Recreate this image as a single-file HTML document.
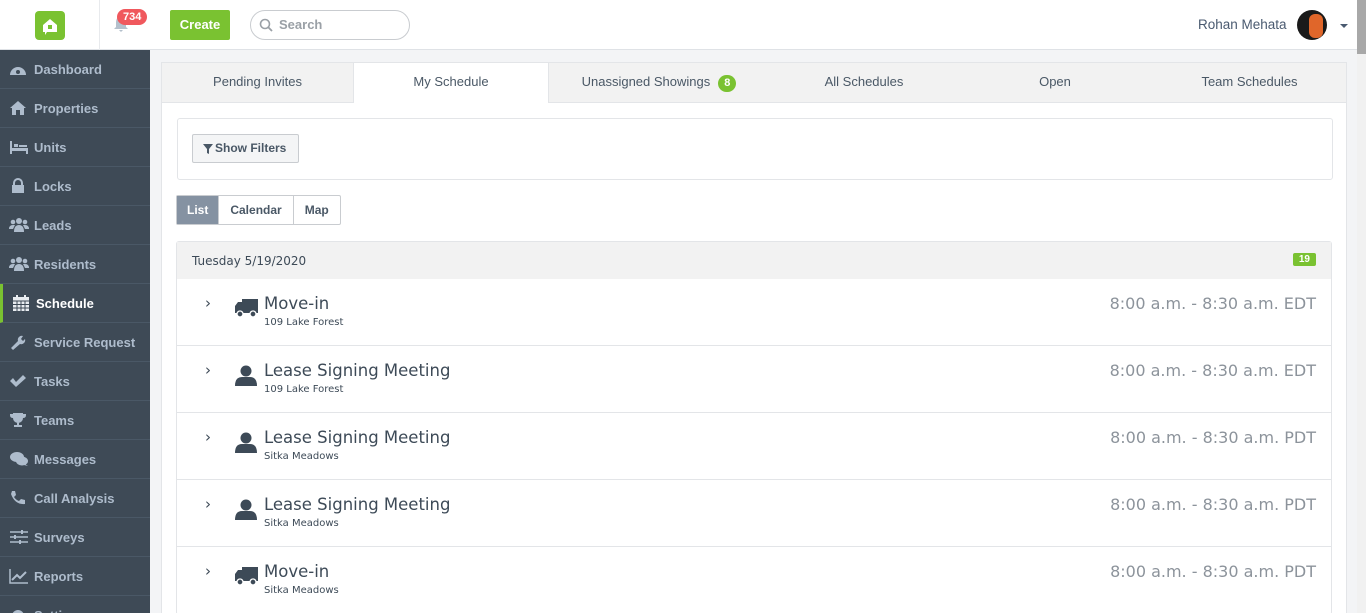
<!DOCTYPE html>
<html style="overflow:hidden;height:613px"><head><meta charset="utf-8"><style>
*{box-sizing:border-box;margin:0;padding:0}
body{width:1366px;height:613px;overflow:hidden;font-family:"Liberation Sans",sans-serif;background:#f3f4f6;position:relative}
.hdr{position:absolute;left:0;top:0;width:1357px;height:50px;background:#fff;border-bottom:1px solid #dfe2e6}
.sb{position:absolute;left:0;top:50px;width:150px;height:563px;background:#3e4a56;overflow:hidden}
.sb div{height:39px;border-bottom:1px solid #4a5866;color:#aebccc;font-weight:bold;font-size:13px;line-height:39px;padding-left:34px;position:relative}
.sb div svg{position:absolute;left:9px;top:11px}
.sb div.act{color:#fff;border-left:3px solid #7ac231;padding-left:33px}
.sb div.act svg{left:9px}
.scroll{position:absolute;left:1357px;top:0;width:9px;height:613px;background:#f1f1f1}
.scroll i{display:block;width:9px;height:54px;background:#a8a8a8}
.panel{position:absolute;left:161px;top:62px;width:1186px;height:551px;background:#fff;border:1px solid #e3e5e8;border-bottom:none;overflow:hidden}
.tabs{height:40px;background:#f2f2f2;border-bottom:1px solid #e3e5e8;display:flex}
.tabs div{flex:none;text-align:center;color:#4a5866;line-height:38px;font-size:13px}
.tabs div.on{background:#fff;border-left:1px solid #e3e5e8;border-right:1px solid #e3e5e8;height:40px}
.badge{display:inline-block;background:#7ac231;color:#fff;border-radius:10px;font-size:11px;font-weight:bold;padding:0 6px;line-height:17px;margin-left:8px}
.fbox{position:absolute;left:15px;top:55px;width:1156px;height:62px;border:1px solid #e3e5e8;border-radius:3px}
.fbtn{position:absolute;left:14px;top:15px;width:107px;height:29px;border:1px solid #c9ccd0;border-radius:2px;background:#f4f5f6;font-size:12px;font-weight:bold;color:#4a5866;line-height:27px;padding-left:22px}
.seg{position:absolute;left:14px;top:132px;height:30px;display:flex;border:1px solid #c9ccd0;border-radius:2px}
.seg div{font-size:12px;font-weight:bold;color:#4a5866;line-height:28px;padding:0 11px;border-right:1px solid #c9ccd0}
.seg div:last-child{border:none}
.seg .on{background:#8592a2;color:#fff;padding:0 10px}
.list{position:absolute;left:14px;top:178px;width:1156px;border:1px solid #e3e5e8;border-radius:3px}
.dh{height:37px;background:#f2f2f2;font-family:"DejaVu Sans",sans-serif;font-size:12px;color:#3d4a57;line-height:38px;padding-left:15px;position:relative}
.dh span{position:absolute;right:15px;top:11px;background:#7ac231;color:#fff;font-size:10px;font-weight:bold;line-height:13px;padding:0 6px;border-radius:2px;font-family:"Liberation Sans",sans-serif}
.row{height:67px;border-bottom:1px solid #e3e5e8;position:relative;font-family:"DejaVu Sans",sans-serif}
.row .ch{position:absolute;left:28px;top:15px;color:#3d4a57;font-size:15px}
.row svg{position:absolute;left:57px;top:18px}
.row .t{position:absolute;left:87px;top:15px;font-size:16.5px;color:#3d4a57}
.row .s{position:absolute;left:87px;top:38px;font-size:10px;color:#3d4a57}
.row .tm{position:absolute;right:15px;top:15px;font-size:16px;color:#8c939b}
</style></head><body>
<div class="hdr">
 <div style="position:absolute;left:99px;top:0;width:1px;height:50px;background:#e8eaed"></div>
 <div style="position:absolute;left:35px;top:11px;width:30px;height:29px;background:#7ac231;border-radius:4px"><svg width="30" height="29"><path d="M8 14 L15 8 L22 14 L22 21 L12 21 L10 24 L10 21 L8 21Z" fill="#fff"/><rect x="13" y="14" width="4" height="4" fill="#7ac231"/></svg></div>
 <svg style="position:absolute;left:112px;top:15px" width="18" height="18"><path d="M9 1 C5 1 4 5 4 8 L4 12 L2 14 L16 14 L14 12 L14 8 C14 5 13 1 9 1Z M7 15 L11 15 L9 17Z" fill="#b4c0cc"/></svg>
 <div style="position:absolute;left:117px;top:9px;background:#f0585d;color:#fff;font-size:11px;font-weight:bold;border-radius:9px;padding:0 6px;line-height:16px">734</div>
 <div style="position:absolute;left:170px;top:10px;width:60px;height:30px;background:#7ac231;border-radius:2px;color:#fff;font-weight:bold;font-size:13px;line-height:30px;text-align:center">Create</div>
 <div style="position:absolute;left:250px;top:10px;width:160px;height:30px;border:1px solid #c9ccd0;border-radius:15px;font-size:13px;font-weight:bold;color:#9aa0a6;line-height:28px;padding-left:28px">Search<svg style="position:absolute;left:8px;top:7px" width="14" height="14"><circle cx="6" cy="6" r="4.5" stroke="#9aa0a6" stroke-width="1.6" fill="none"/><path d="M9.5 9.5 L13 13" stroke="#9aa0a6" stroke-width="1.8"/></svg></div>
 <div style="position:absolute;left:1198px;top:17px;font-size:13.5px;color:#4a5a70">Rohan Mehata</div>
 <div style="position:absolute;left:1297px;top:10px;width:30px;height:30px;border-radius:50%;background:#1a1a1a;overflow:hidden"><div style="position:absolute;left:12px;top:4px;width:14px;height:24px;background:#e0662a;border-radius:6px"></div></div>
 <div style="position:absolute;left:1340px;top:24px;border:4px solid transparent;border-top:4px solid #4a5a70"></div>
</div>
<div class="sb">
 <div><svg width="18" height="16"><path d="M1 14 A8 8 0 1 1 17 14Z" fill="#aebccc"/><circle cx="9" cy="11" r="2" fill="#3e4a56"/></svg>Dashboard</div>
 <div><svg width="18" height="16"><path d="M9 1 L1 8 L3 8 L3 15 L7 15 L7 10 L11 10 L11 15 L15 15 L15 8 L17 8Z" fill="#aebccc"/></svg>Properties</div>
 <div><svg width="20" height="16"><path d="M1 2 L3 2 L3 9 L19 9 L19 15 L17 15 L17 12 L3 12 L3 15 L1 15Z M5 5 h4 v3 h-4Z M10 6 h8 v2 h-8Z" fill="#aebccc"/></svg>Units</div>
 <div><svg width="18" height="16"><path d="M5 7 V5 A4 4 0 0 1 13 5 V7" stroke="#aebccc" stroke-width="2" fill="none"/><rect x="3" y="7" width="12" height="8" fill="#aebccc"/></svg>Locks</div>
 <div><svg width="20" height="16"><circle cx="10" cy="4" r="3" fill="#aebccc"/><circle cx="4" cy="5" r="2.3" fill="#aebccc"/><circle cx="16" cy="5" r="2.3" fill="#aebccc"/><path d="M5 15 Q5 8 10 8 Q15 8 15 15Z M0 12 Q0 8 4 8 L6 8 L4 12Z M20 12 Q20 8 16 8 L14 8 L16 12Z" fill="#aebccc"/></svg>Leads</div>
 <div><svg width="20" height="16"><circle cx="10" cy="4" r="3" fill="#aebccc"/><circle cx="4" cy="5" r="2.3" fill="#aebccc"/><circle cx="16" cy="5" r="2.3" fill="#aebccc"/><path d="M5 15 Q5 8 10 8 Q15 8 15 15Z M0 12 Q0 8 4 8 L6 8 L4 12Z M20 12 Q20 8 16 8 L14 8 L16 12Z" fill="#aebccc"/></svg>Residents</div>
 <div class="act"><svg width="18" height="16"><rect x="1" y="2" width="16" height="14" fill="#e8ecf0"/><path d="M1 6 H17 M1 9.5 H17 M1 13 H17 M5 6 V16 M9 6 V16 M13 6 V16" stroke="#3e4a56" stroke-width="1"/><rect x="4" y="0" width="2" height="4" fill="#e8ecf0"/><rect x="12" y="0" width="2" height="4" fill="#e8ecf0"/></svg>Schedule</div>
 <div><svg width="18" height="16"><path d="M2 14 L9 7 A4 4 0 0 1 14 2 L12 5 L14 7 L16 5 A4 4 0 0 1 11 10 L4 16Z" fill="#aebccc"/></svg>Service Request</div>
 <div><svg width="18" height="16"><path d="M1 8 L4 5 L7 9 L14 2 L17 5 L7 14Z" fill="#aebccc"/></svg>Tasks</div>
 <div><svg width="18" height="16"><path d="M4 1 H14 V6 A5 5 0 0 1 4 6Z M1 2 H4 V6 Q1 6 1 3Z M17 2 H14 V6 Q17 6 17 3Z M8 10 H10 V13 H13 V15 H5 V13 H8Z" fill="#aebccc"/></svg>Teams</div>
 <div><svg width="20" height="16"><ellipse cx="8" cy="6" rx="7" ry="5" fill="#aebccc"/><ellipse cx="13" cy="10" rx="6" ry="4.5" fill="#aebccc"/><path d="M16 13 L19 15 L15 14Z" fill="#aebccc"/></svg>Messages</div>
 <div><svg width="18" height="16"><path d="M3 1 L6 1 L7 5 L5 7 Q7 10 10 11 L12 9 L16 10 L16 14 Q6 15 2 4Z" fill="#aebccc"/></svg>Call Analysis</div>
 <div><svg width="20" height="16"><path d="M1 3 H19 M1 8 H19 M1 13 H19" stroke="#aebccc" stroke-width="1.5"/><rect x="12" y="1" width="2" height="4" fill="#aebccc"/><rect x="5" y="6" width="2" height="4" fill="#aebccc"/><rect x="10" y="11" width="2" height="4" fill="#aebccc"/></svg>Surveys</div>
 <div><svg width="20" height="16"><path d="M1 1 V15 H19" stroke="#aebccc" stroke-width="1.5" fill="none"/><path d="M3 12 L8 7 L11 10 L17 4" stroke="#aebccc" stroke-width="2" fill="none"/></svg>Reports</div>
 <div><svg width="18" height="16"><circle cx="9" cy="9" r="6" fill="#aebccc"/></svg>Settings</div>
</div>
<div class="panel">
 <div class="tabs"><div style="width:191px">Pending Invites</div><div class="on" style="width:196px">My Schedule</div><div style="width:220px">Unassigned Showings<span class="badge">8</span></div><div style="width:190px">All Schedules</div><div style="width:192px">Open</div><div style="width:197px">Team Schedules</div></div>
 <div class="fbox"><div class="fbtn"><svg style="position:absolute;left:10px;top:9px" width="10" height="10"><path d="M0 0 H10 L6 5 V10 L4 9 V5Z" fill="#4a5866"/></svg>Show Filters</div></div>
 <div class="seg"><div class="on">List</div><div>Calendar</div><div>Map</div></div>
 <div class="list">
  <div class="dh">Tuesday 5/19/2020<span>19</span></div>
  <div class="row"><span class="ch">›</span><svg width="26" height="22"><path d="M8 2 H24 V16 H8Z M1 9 L4 5 H8 V16 H1Z" fill="#3d4a57"/><circle cx="6" cy="17" r="3" fill="#3d4a57" stroke="#fff" stroke-width="1.3"/><circle cx="19" cy="17" r="3" fill="#3d4a57" stroke="#fff" stroke-width="1.3"/></svg><span class="t">Move-in</span><span class="s">109 Lake Forest</span><span class="tm">8:00 a.m. - 8:30 a.m. EDT</span></div>
  <div class="row"><span class="ch">›</span><svg width="26" height="24"><circle cx="12" cy="7" r="5.5" fill="#3d4a57"/><path d="M1 22 Q1 13 8 13 L16 13 Q23 13 23 22Z" fill="#3d4a57"/></svg><span class="t">Lease Signing Meeting</span><span class="s">109 Lake Forest</span><span class="tm">8:00 a.m. - 8:30 a.m. EDT</span></div>
  <div class="row"><span class="ch">›</span><svg width="26" height="24"><circle cx="12" cy="7" r="5.5" fill="#3d4a57"/><path d="M1 22 Q1 13 8 13 L16 13 Q23 13 23 22Z" fill="#3d4a57"/></svg><span class="t">Lease Signing Meeting</span><span class="s">Sitka Meadows</span><span class="tm">8:00 a.m. - 8:30 a.m. PDT</span></div>
  <div class="row"><span class="ch">›</span><svg width="26" height="24"><circle cx="12" cy="7" r="5.5" fill="#3d4a57"/><path d="M1 22 Q1 13 8 13 L16 13 Q23 13 23 22Z" fill="#3d4a57"/></svg><span class="t">Lease Signing Meeting</span><span class="s">Sitka Meadows</span><span class="tm">8:00 a.m. - 8:30 a.m. PDT</span></div>
  <div class="row"><span class="ch">›</span><svg width="26" height="22"><path d="M8 2 H24 V16 H8Z M1 9 L4 5 H8 V16 H1Z" fill="#3d4a57"/><circle cx="6" cy="17" r="3" fill="#3d4a57" stroke="#fff" stroke-width="1.3"/><circle cx="19" cy="17" r="3" fill="#3d4a57" stroke="#fff" stroke-width="1.3"/></svg><span class="t">Move-in</span><span class="s">Sitka Meadows</span><span class="tm">8:00 a.m. - 8:30 a.m. PDT</span></div>
 </div>
</div>
<div class="scroll"><i></i></div>
</body></html>
